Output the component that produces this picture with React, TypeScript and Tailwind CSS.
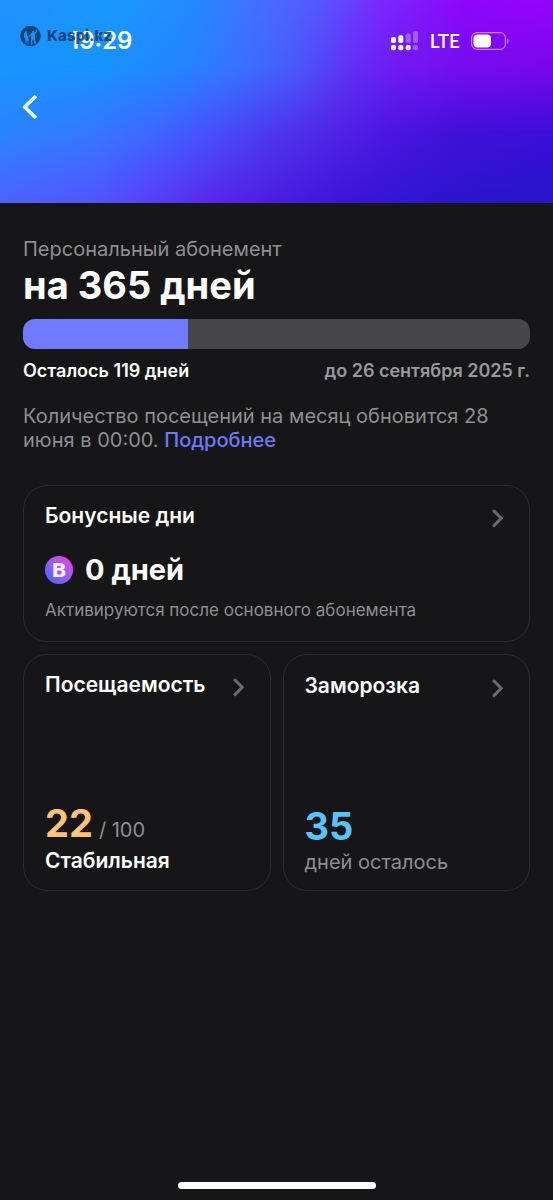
import type { ReactNode } from "react";

const membership = {
  total: 365,
  left: 119,
  until: "26 сентября 2025 г.",
};

function Chevron() {
  return (
    <svg width="12" height="24" viewBox="0 0 12 24" fill="none" className="shrink-0" aria-hidden="true">
      <path d="M2 7 9.2 14.3 2 21.6" stroke="#6b6b6e" strokeWidth="3" strokeLinecap="round" />
    </svg>
  );
}

function Signal() {
  return (
    <svg width="28" height="20" viewBox="0 0 28 20" fill="#fff" aria-hidden="true">
      <rect x="0" y="6" width="5" height="6" rx="1.8" />
      <rect x="7.3" y="4.3" width="5" height="7.7" rx="1.8" />
      <rect x="14.7" y="2.5" width="5" height="9.5" rx="1.8" opacity=".3" />
      <rect x="22" y="0" width="5" height="12" rx="1.8" opacity=".3" />
      <rect x="0" y="14" width="5" height="5.2" rx="1.8" />
      <rect x="7.3" y="14" width="5" height="5.2" rx="1.8" />
      <rect x="14.7" y="14" width="5" height="5.2" rx="1.8" />
      <rect x="22" y="14" width="5" height="5.2" rx="1.8" opacity=".3" />
    </svg>
  );
}

function Battery() {
  return (
    <svg width="38" height="18" viewBox="0 0 38 18" fill="none" aria-hidden="true">
      <rect x=".6" y=".6" width="33.8" height="16.8" rx="5.4" stroke="#fff" strokeOpacity=".5" strokeWidth="1.2" />
      <rect x="2.5" y="2.5" width="17.5" height="13" rx="4" fill="#fff" />
      <path d="M36 6.2c1.8.8 1.8 4.8 0 5.6z" fill="#fff" fillOpacity=".55" />
    </svg>
  );
}

function Brand() {
  return (
    <div className="absolute left-5 top-[25px] flex items-center gap-1.5 text-[#0d3157]/80">
      <svg width="21" height="22" viewBox="0 0 21 22" aria-hidden="true">
        <circle cx="10.5" cy="11" r="10.3" fill="currentColor" />
        <path
          d="M5.6 6.2c.9 0 1.2.6 1.1 1.5l.3 3.3 1.6.6.1 8-.9-.3-.5-3.7-.6-.1-.3 3-.8-.5-.3-4.2-1.3-1.8c-.1-2.4.1-3.9.8-4.6 0-.7.2-1.2.8-1.2z"
          fill="#1993fb"
        />
        <path
          d="M13.2 5.4c.8 0 1.3.6 1.2 1.4l-.3 1 1.6-1.1 1.3-3 .5.3-1 3.6-1.9 2.2.5 3.7.7 5.6-.9.6-1.5-5-.9-.1-.3 5.4-1 .3-.3-6.2.3-3.6-1.9 1.6-.4-.6 2.3-2.9 1-.8c-.2-1.5.2-2.4 1-2.4z"
          fill="#1993fb"
        />
      </svg>
      <span className="text-[15px] font-extrabold leading-5">Kaspi.kz</span>
    </div>
  );
}

// four horizontal gradients, faded into each other from top to bottom
function HeaderBackground() {
  return (
    <div className="absolute inset-0" aria-hidden="true">
      <div className="absolute inset-0 bg-[linear-gradient(to_right,#4f62ff,#5253ff_18%,#5a3cf8_28%,#5728ec_38%,#4a1ce0_50%,#3c16d8_62%,#2c16d0_78%,#2616cc)]" />
      <div className="absolute inset-0 bg-[linear-gradient(to_right,#2a84ff,#347aff_15%,#3f66ff_28%,#4850fa_38%,#4c3aee_48%,#5024e6_60%,#4c16e0_70%,#4010d6_84%,#3c0ed8)] [mask-image:linear-gradient(to_bottom,#000_66%,transparent)]" />
      <div className="absolute inset-0 bg-[linear-gradient(to_right,#1894ff,#1793ff_18%,#2585ff_33%,#3a70ff_44%,#4a5afa_53%,#6032f4_63%,#701af2_72%,#760cf0_84%,#7a06ee)] [mask-image:linear-gradient(to_bottom,#000_33%,transparent_66%)]" />
      <div className="absolute inset-0 bg-[linear-gradient(to_right,#2090ff,#1a98ff_20%,#2488ff_36%,#4470ff_46%,#5558ff_58%,#7a28fc_69%,#8e06fa_84%,#9604fa)] [mask-image:linear-gradient(to_bottom,#000,transparent_33%)]" />
    </div>
  );
}

function Header() {
  return (
    <header className="relative h-[203px] shrink-0 text-white">
      <HeaderBackground />
      <div className="relative flex items-center justify-between pt-[25px] pr-11 pl-[69px]">
        <span className="text-2xl font-semibold leading-8">19:29</span>
        <div className="flex items-center gap-[11px]">
          <Signal />
          <span className="font-[Lato,sans-serif] text-[19px] font-semibold leading-8">LTE</span>
          <Battery />
        </div>
      </div>
      <Brand />
      <button type="button" aria-label="Назад" className="relative mt-[37px] ml-[21px] block">
        <svg width="18" height="26" viewBox="0 0 18 26" fill="none">
          <path d="M15 2 3.6 13 15 24" stroke="#e6fbff" strokeWidth="3.8" strokeLinejoin="round" />
        </svg>
      </button>
    </header>
  );
}

type CardProps = {
  title: string;
  className?: string;
  children: ReactNode;
};

function Card({ title, className = "", children }: CardProps) {
  return (
    <button
      type="button"
      className={`flex flex-col rounded-3xl border border-[#2c2c2e] pr-[25px] pl-[21px] text-left ${className}`}
    >
      <span className="flex w-full items-center justify-between">
        <span className="text-[21px] font-semibold leading-7">{title}</span>
        <Chevron />
      </span>
      {children}
    </button>
  );
}

function BonusIcon() {
  return (
    <span className="flex size-7 items-center justify-center rounded-full bg-linear-to-tr from-[#5a62ff] from-20% to-[#dc40e8] to-85% font-['DejaVu_Sans',sans-serif] text-xl font-bold leading-7 text-[#fbeaff]">
      B
    </span>
  );
}

export default function App() {
  const progress = (membership.left / membership.total) * 100;

  return (
    <div className="flex min-h-screen flex-col bg-[#161618] font-[Inter,sans-serif] text-white">
      <Header />
      <main className="flex-1 px-[23px] pt-8">
        <p className="text-xl leading-7 text-[#8e8e92]">Персональный абонемент</p>
        <h1 className="text-[38px] font-bold leading-11">на {membership.total} дней</h1>
        <div
          role="progressbar"
          aria-label="Осталось дней"
          aria-valuenow={membership.left}
          aria-valuemax={membership.total}
          className="mt-3 h-[30px] overflow-hidden rounded-xl bg-[#464549]"
        >
          <div className="h-full bg-[#6f7aff]" style={{ width: `${progress}%` }} />
        </div>
        <div className="mt-2 flex justify-between text-lg font-semibold leading-7">
          <span>Осталось {membership.left} дней</span>
          <span className="text-[#98989d]">до {membership.until}</span>
        </div>
        <p className="mt-[19px] text-xl leading-6 text-[#8e8e92]">
          Количество посещений на месяц обновится 28 июня в 00:00.{" "}
          <a href="#details" className="font-medium text-[#7079f5]">
            Подробнее
          </a>
        </p>

        <div className="mt-[33px] grid grid-cols-2 gap-3">
          <Card title="Бонусные дни" className="col-span-2 pt-4 pb-[17px]">
            <span className="mt-[22px] flex items-center gap-3">
              <BonusIcon />
              <span className="text-[29px] font-bold leading-9">0 дней</span>
            </span>
            <span className="mt-2 text-[17px] leading-7 text-[#8e8e92]">Активируются после основного абонемента</span>
          </Card>
          <Card title="Посещаемость" className="min-h-[237px] pt-4 pb-[15px]">
            <span className="mt-auto flex items-baseline gap-1.5">
              <span className="text-[38px] font-bold leading-12 text-[#ffc27a]">22</span>
              <span className="text-xl text-[#8e8e92]">/ 100</span>
            </span>
            <span className="text-[21px] font-semibold leading-7">Стабильная</span>
          </Card>
          <Card title="Заморозка" className="min-h-[237px] pt-[17px] pb-[14px]">
            <span className="mt-auto text-[38px] font-bold leading-11 text-[#5ac3fa]">35</span>
            <span className="text-xl leading-7 text-[#8e8e92]">дней осталось</span>
          </Card>
        </div>
      </main>
      <div className="mx-auto mb-[11px] h-[7px] w-[198px] rounded-full bg-white" />
    </div>
  );
}
